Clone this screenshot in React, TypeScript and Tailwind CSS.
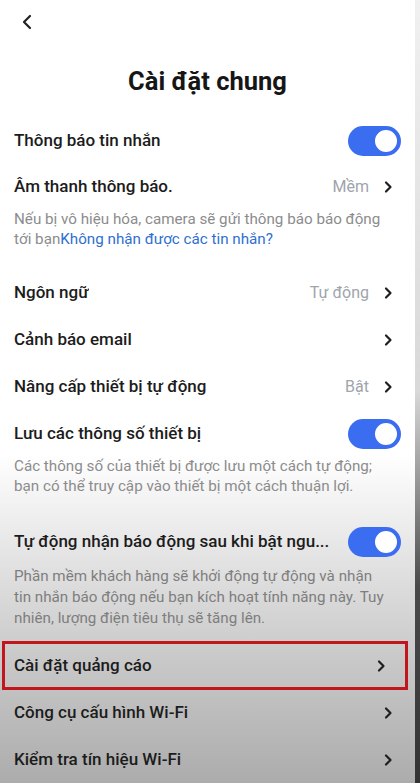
import React from "react";

const Chevron = () => (
  <svg width="10" height="14" viewBox="0 0 10 14" fill="none">
    <path d="M3 2.5L7.5 7L3 11.5" stroke="#1f1f1f" strokeWidth="2.2" strokeLinecap="round" strokeLinejoin="round" />
  </svg>
);

const Toggle = () => (
  <div className="w-[53px] h-[30px] rounded-full bg-[#3a6df0] flex items-center justify-end pr-[2px]">
    <div className="w-[26px] h-[26px] rounded-full bg-white border-2 border-[#3a6df0]" />
  </div>
);

function Row({ label, value, toggle }: { label: string; value?: string; toggle?: boolean }) {
  return (
    <div className="h-[47px] flex items-center justify-between pl-[14px] pr-[14px]">
      <span className="text-[17px] text-[#1c1c1c] font-medium truncate">{label}</span>
      {toggle ? (
        <Toggle />
      ) : (
        <div className="flex items-center gap-[14px] pr-[8px]">
          {value && <span className="text-[16px] text-[#a0a4ab]">{value}</span>}
          <Chevron />
        </div>
      )}
    </div>
  );
}

export default function App() {
  return (
    <div
      className="w-[420px] h-[783px] overflow-hidden flex bg-[linear-gradient(to_bottom,#ffffff_0%,#ffffff_58%,#e6e6e6_70%,#c9c9c9_84%,#acacac_100%)]"
      style={{ fontFamily: "Roboto, 'Noto Sans', Arial, sans-serif" }}
    >
      <div className="flex-1 flex flex-col">
        {/* HEADER */}
        <div className="h-[44px] flex items-center pl-[20px]">
          <svg width="14" height="18" viewBox="0 0 14 18" fill="none">
            <path d="M10 3L4 9L10 15" stroke="#222" strokeWidth="2.2" strokeLinecap="round" strokeLinejoin="round" />
          </svg>
        </div>
        <h1 className="h-[73px] flex items-center justify-center text-[25.5px] font-bold text-[#161616] pt-[2px]">
          Cài đặt chung
        </h1>

        <Row label="Thông báo tin nhắn" toggle />
        <div className="-mt-[1px]">
          <Row label="Âm thanh thông báo." value="Mềm" />
        </div>
        <p className="pl-[14px] pr-[26px] text-[15.2px] leading-[20px] text-[#8c8c8c] -mt-[1px]">
          Nếu bị vô hiệu hóa, camera sẽ gửi thông báo báo động tới bạn
          <span className="text-[#2f6fd0]">Không nhận được các tin nhắn?</span>
        </p>

        <div className="mt-[20px]">
          <Row label="Ngôn ngữ" value="Tự động" />
          <Row label="Cảnh báo email" />
          <Row label="Nâng cấp thiết bị tự động" value="Bật" />
          <Row label="Lưu các thông số thiết bị" toggle />
        </div>
        <p className="pl-[14px] pr-[26px] text-[15.2px] leading-[20px] text-[#8c8c8c] -mt-[1px]">
          Các thông số của thiết bị được lưu một cách tự động; bạn có thể truy cập vào thiết bị một cách thuận lợi.
        </p>

        <div className="mt-[22px]">
          <Row label="Tự động nhận báo động sau khi bật ngu..." toggle />
        </div>
        <p className="pl-[14px] pr-[26px] text-[15.2px] leading-[21px] text-[#7e7e7e] mt-[1px]">
          Phần mềm khách hàng sẽ khởi động tự động và nhận tin nhắn báo động nếu bạn kích hoạt tính năng này. Tuy nhiên, lượng điện tiêu thụ sẽ tăng lên.
        </p>

        <div className="mt-[12px] ml-[2px] mr-[7px] border-[3px] border-[#c0161c] -mb-[1px]">
          <div className="-ml-[5px] -my-[2px] -mr-[3px]">
            <Row label="Cài đặt quảng cáo" />
          </div>
        </div>
        <Row label="Công cụ cấu hình Wi-Fi" />
        <Row label="Kiểm tra tín hiệu Wi-Fi" />
      </div>
      <div className="w-[5px] bg-[linear-gradient(to_bottom,#f0f0f0_0%,#d8d8d8_50%,#4a4a4a_75%,#333333_100%)]" />
    </div>
  );
}
